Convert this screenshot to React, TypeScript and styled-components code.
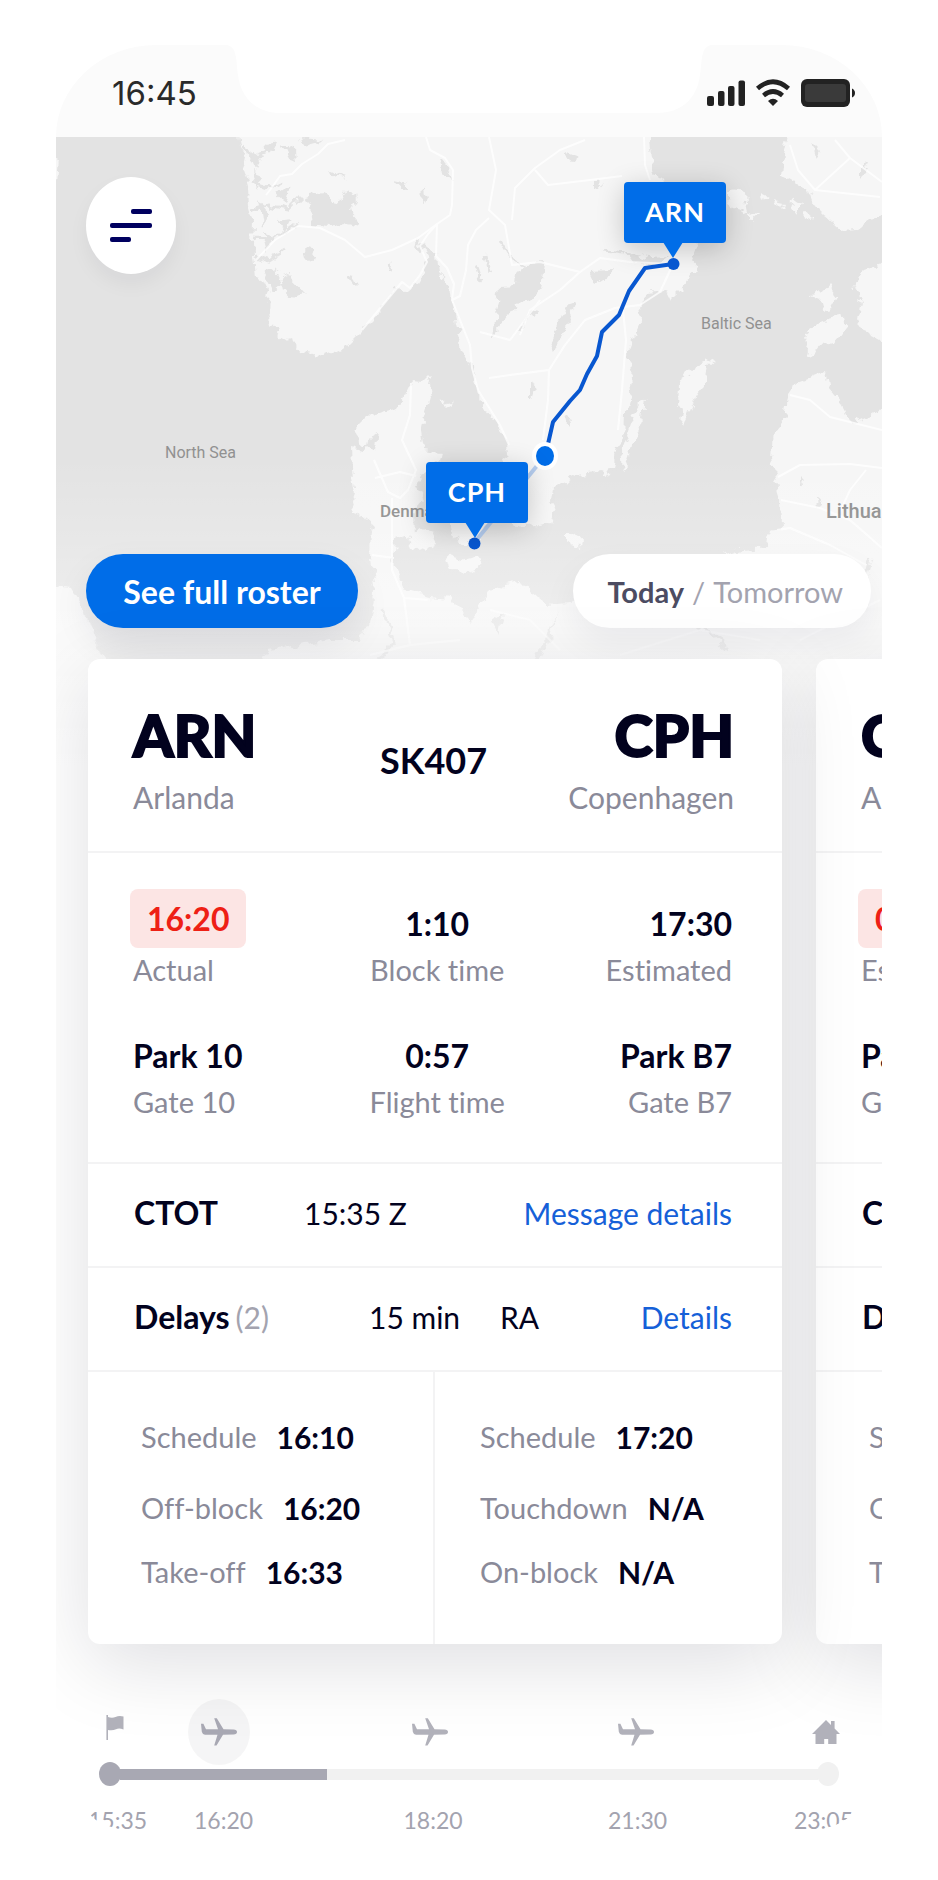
import React from "react";
import styled, { createGlobalStyle } from "styled-components";

const color = {
  ink: "#02021e",
  muted: "#8a8a99",
  faint: "#a3a3af",
  line: "#f3f3f4",
  blue: "#006de8",
  link: "#1560d8",
  red: "#ee2015",
};

const GlobalStyle = createGlobalStyle`
  * { box-sizing: border-box; }
  body {
    margin: 0;
    background: #fff;
    color: ${color.ink};
    font-family: Lato, "Open Sans", sans-serif;
    font-variant-ligatures: none;
  }
  button { font: inherit; border: 0; padding: 0; cursor: pointer; }
  h2, p, dl, dd, dt, ul { margin: 0; padding: 0; }
  ul { list-style: none; }
`;

const Page = styled.div`
  padding: 45px 56px;
`;

const Phone = styled.main`
  display: flex;
  flex-direction: column;
  overflow: hidden;
  border-radius: 100px 100px 0 0 / 92px 92px 0 0;
`;

/* ---------- status bar ---------- */

const StatusBar = styled.header`
  position: relative;
  display: flex;
  align-items: center;
  justify-content: space-between;
  height: 92px;
  padding: 4px 27px 0 56px;
  background: #fbfbfb;
`;

const Notch = styled.svg`
  position: absolute;
  top: 0;
  left: 50%;
  width: 484px;
  height: 68px;
  margin-left: -242px;
`;

const Clock = styled.time`
  font: 400 33px/40px Inter, sans-serif;
  color: #2a2a2a;
`;

/* ---------- map ---------- */

const MapSection = styled.section`
  position: relative;
  display: flex;
  flex-direction: column;
  justify-content: space-between;
  height: 522px;
  padding: 40px 11px 31px 30px;
`;

const MapCanvas = styled.div`
  position: absolute;
  top: 0;
  left: 0;
  right: 0;
  height: 640px;
  overflow: hidden;
  background: #e3e3e3;
`;

const MapDrawing = styled.svg`
  display: block;
  width: 826px;
  height: 640px;
`;

const MapFade = styled.div`
  position: absolute;
  inset: 0;
  background: linear-gradient(rgba(255, 255, 255, 0) 320px, rgba(255, 255, 255, 0.18) 403px, rgba(255, 255, 255, 0.5) 513px, #fff 630px);
`;

const MapLabel = styled.span<{ $x: number; $y: number; $size: number; $strong?: boolean }>`
  position: absolute;
  left: ${(p) => p.$x}px;
  top: ${(p) => p.$y}px;
  font: ${(p) => (p.$strong ? 500 : 400)} ${(p) => p.$size}px/20px Roboto, sans-serif;
  color: ${(p) => (p.$strong ? "#888" : "#919191")};
  white-space: nowrap;
`;

const Pin = styled.div<{ $x: number; $y: number }>`
  position: absolute;
  left: ${(p) => p.$x}px;
  top: ${(p) => p.$y}px;
  width: 102px;
  border-radius: 4px;
  background: ${color.blue};
  box-shadow: 0 6px 28px rgba(0, 0, 0, 0.2);
  color: #fff;
  font-size: 27px;
  font-weight: 700;
  line-height: 59px;
  padding-bottom: 2px;
  letter-spacing: 1px;
  text-align: center;

  &::after {
    content: "";
    position: absolute;
    top: 60px;
    left: 39px;
    border: solid transparent;
    border-width: 16px 10px 0;
    border-top-color: ${color.blue};
  }
`;

const MenuButton = styled.button`
  position: relative;
  display: flex;
  align-items: center;
  justify-content: center;
  width: 90px;
  height: 97px;
  border-radius: 50%;
  background: #fff;
  box-shadow: 0 10px 20px rgba(0, 0, 30, 0.05);
`;

const MapActions = styled.div`
  position: relative;
  display: flex;
  justify-content: space-between;
`;

const RosterButton = styled.button`
  width: 272px;
  height: 74px;
  border-radius: 37px;
  background: ${color.blue};
  box-shadow: 0 16px 36px rgba(0, 0, 50, 0.08);
  color: #fff;
  font-size: 32px;
  font-weight: 700;
`;

const DayToggle = styled.div`
  display: flex;
  align-items: center;
  justify-content: flex-end;
  gap: 8px;
  width: 298px;
  height: 74px;
  padding-right: 28px;
  border-radius: 37px;
  background: #fff;
  box-shadow: 0 16px 36px rgba(0, 0, 50, 0.06);
  color: ${color.faint};
  font-size: 29px;
`;

const DayButton = styled.button<{ $active?: boolean }>`
  background: none;
  color: ${(p) => (p.$active ? "#4c4c62" : color.faint)};
  font-weight: ${(p) => (p.$active ? 700 : 400)};
`;

/* ---------- flight cards ---------- */

const Carousel = styled.section`
  position: relative;
  display: flex;
  gap: 34px;
  padding-left: 32px;
`;

const Card = styled.article<{ $order: number }>`
  position: relative;
  z-index: ${(p) => 2 - p.$order};
  flex: 0 0 calc(100% - 100px);
  border-radius: 12px;
  background: #fff;
  box-shadow: 0 20px 80px rgba(0, 0, 30, 0.13);
`;

const Route = styled.div`
  display: grid;
  grid-template-columns: 1fr auto 1fr;
  align-items: center;
  padding: 46px 48px 36px 45px;
  border-bottom: 2px solid ${color.line};
`;

const Airport = styled.div<{ $end?: boolean }>`
  display: flex;
  flex-direction: column;
  gap: 14px;
  text-align: ${(p) => (p.$end ? "right" : "left")};
`;

const Code = styled.h2`
  font-size: 58px;
  font-weight: 900;
  line-height: 60px;
  -webkit-text-stroke: 2px ${color.ink};
`;

const FlightNumber = styled.p`
  font-size: 36px;
  font-weight: 700;
  line-height: 44px;
`;

const Caption = styled.span<{ $large?: boolean }>`
  color: ${color.muted};
  font-size: ${(p) => (p.$large ? 30 : 29)}px;
  line-height: 36px;
  white-space: nowrap;
`;

const Times = styled.div`
  display: grid;
  grid-template-columns: 25fr auto 24fr;
  align-items: end;
  row-gap: 44px;
  padding: 36px 50px 42px 45px;
  border-bottom: 2px solid ${color.line};
`;

const Stat = styled.div<{ $align: "flex-start" | "center" | "flex-end" }>`
  display: flex;
  flex-direction: column;
  align-items: ${(p) => p.$align};
  gap: 4px;
`;

const Value = styled.strong`
  font-size: 32px;
  font-weight: 700;
  line-height: 48px;
  white-space: nowrap;
`;

const LateBadge = styled(Value)`
  margin-left: -3px;
  padding: 0 17px;
  border-radius: 8px;
  background: #fce5e4;
  color: ${color.red};
  line-height: 59px;
`;

const InfoRow = styled.div`
  display: flex;
  align-items: baseline;
  padding: 31px 50px 35px 46px;
  border-bottom: 2px solid ${color.line};
  font-size: 30px;
  line-height: 36px;
  white-space: nowrap;
`;

const InfoLabel = styled.strong<{ $width: number }>`
  flex: 0 0 ${(p) => p.$width}px;
  font-size: 32px;
  font-weight: 700;
`;

const InfoValue = styled.span<{ $width: number }>`
  flex: 0 0 ${(p) => p.$width}px;
`;

const Count = styled.span`
  margin-left: 6px;
  color: ${color.faint};
  font-size: 30px;
  font-weight: 400;
`;

const InfoLink = styled.a`
  margin-left: auto;
  color: ${color.link};
  text-decoration: none;
`;

const Schedule = styled.div`
  display: grid;
  grid-template-columns: 345fr 349fr;
`;

const ScheduleList = styled.dl`
  padding: 47px 20px 54px 53px;

  & + & {
    padding-left: 45px;
    border-left: 2px solid ${color.line};
  }
`;

const ScheduleRow = styled.div`
  display: flex;
  gap: 20px;
  font-size: 30px;
  line-height: 36px;
  white-space: nowrap;

  & + & { margin-top: 28px; }
  &:first-child { padding-bottom: 7px; }

  dt {
    color: ${color.muted};
    font-size: 29px;
  }
  dd { font-weight: 700; }
`;

/* ---------- day timeline ---------- */

const Timeline = styled.section`
  position: relative;
  z-index: 3;
  padding: 55px 29px 16px 32px;
`;

const Stops = styled.ul`
  display: grid;
  grid-template-columns: 54fr 154fr 268fr 144fr 145fr;
  justify-items: center;
  align-items: center;

  li:last-child { justify-self: end; }
`;

const IconStop = styled.li<{ $active?: boolean }>`
  display: flex;
  align-items: center;
  justify-content: center;
  width: ${(p) => (p.$active ? 62 : 54)}px;
  height: 66px;
  border-radius: 50%;
  background: ${(p) => (p.$active ? "rgba(0, 0, 20, 0.04)" : "none")};
`;

const Track = styled.div`
  display: flex;
  align-items: center;
  margin: -3px 14px 0 11px;
`;

const TrackDot = styled.span<{ $done?: boolean }>`
  width: 22px;
  height: 24px;
  border-radius: 50%;
  background: ${(p) => (p.$done ? "#a8a8b3" : "#f1f1f1")};
`;

const TrackPart = styled.span<{ $done?: boolean }>`
  height: 11px;
  margin: 0 -1px;
  background: ${(p) => (p.$done ? "#a8a8b3" : "#f1f1f1")};
`;

const StopTimes = styled(Stops)`
  margin-top: 22px;
  overflow: hidden;
  border-radius: 0 0 60px 60px / 0 0 24px 24px;
  color: ${color.faint};
  font-size: 23px;
  line-height: 24px;
`;

const StopTime = styled.li`
  white-space: nowrap;
`;

/* ---------- drawings ---------- */

const StatusIcons = () => (
  <svg width="148" height="28" viewBox="707 79 148 28" aria-label="Signal, Wi-Fi, battery">
    <g fill="#222">
      <rect x="707" y="96" width="7" height="10" rx="2" />
      <rect x="718" y="91" width="6.5" height="15" rx="2" />
      <rect x="728" y="86" width="6.5" height="20" rx="2" />
      <rect x="738.5" y="80.5" width="6.5" height="25.500" rx="2" />
      <rect x="801" y="79" width="49" height="28" rx="6" />
      <path d="M852 88.500q3 1.500 3 4.500t-3 4.500z" />
      <path d="M773 106l-5-5q5-4.500 10 0z" />
    </g>
    <g fill="none" stroke="#222" strokeWidth="4.600">
      <path d="M763.500 95.500q9.500-8 19 0" />
      <path d="M757.500 88.500q15.500-13.500 31 0" />
    </g>
    <rect x="805" y="84" width="41" height="18" rx="3" fill="#3a3a3a" />
  </svg>
);

const MenuIcon = () => (
  <svg width="42" height="33" viewBox="0 0 42 33" fill="#00005f" aria-hidden="true">
    <rect x="21" y="0" width="21" height="5" rx="2" />
    <rect x="0" y="14" width="42" height="5" rx="2" />
    <rect x="0" y="28" width="21" height="5" rx="2" />
  </svg>
);

const Plane = ({ strong }: { strong?: boolean }) => (
  <svg width="36" height="28" viewBox="0 0 36 27.500" fill={strong ? "#a8a8b3" : "#b1b1ba"} aria-hidden="true">
    <path d="M0 5.500H2.400L5 11H17L13.200 0H15.800L22.500 11L32.500 11.200Q36 11.600 36 13.800Q36 16 32.500 16.200L22 16.500L15.500 27.300H13.200L16.500 16.500H4Q1.500 16.300 .8 13.500Z" />
  </svg>
);

const Flag = () => (
  <svg width="18" height="36" viewBox="0 0 18 36" fill="#b1b1ba" aria-hidden="true">
    <path d="M.4 1H2V3Q6 4.500 9.500 3Q13 1.300 17.500 2.500V15.500Q13 13.800 10 15.300Q6.500 17 2 16V26H.4Z" />
  </svg>
);

const House = () => (
  <svg width="28" height="24" viewBox="0 0 28 24" fill="#b1b1ba" aria-hidden="true">
    <path d="M14 0L19 5V1H22.600V8.600L28 14H24.500V24H16.200V19H12.200V24H3.500V14H0Z" />
  </svg>
);

const MapArt = () => (
  <MapDrawing viewBox="56 137 826 640" aria-hidden="true">
    <defs>
      <filter id="coast" x="-2%" y="-2%" width="104%" height="104%">
        <feTurbulence type="fractalNoise" baseFrequency="0.09" numOctaves="3" seed="4" />
        <feDisplacementMap in="SourceGraphic" scale="13" xChannelSelector="R" yChannelSelector="G" />
      </filter>
    </defs>
    <g filter="url(#coast)">
      <g fill="#f6f6f6">
        <path d="M236 125L240 146L246 157L243 170L248 186L249 205L254 222L253 245L256 276L262 278L269 292L267 310L270 324L280 336L296 347L300 352L325 356L345 347L362 330L380 312L386 300L400 288L410 290L418 284L425 272L428 254L436 254L438 272L451 284L453 302L456 325L461 342L463 353L472 368L476 385L480 400L489 415L500 430L508 441L509 453L500 460L505 485L512 523L530 526L550 523L555 512L551 498L553 488L564 482L575 475L600 473L607 478L613 469L617 447L624 438L625 415L630 400L628 385L633 374L626 355L632 340L641 320L639 308L647 292L665 290L670 300L680 290L690 277L697 268L690 260L699 243L692 228L680 213L668 203L672 184L657 178L652 165L649 150L647 125Z" />
        <path d="M432 374L424 382L412 381L405 396L397 408L383 412L368 415L358 425L355 437L365 446L371 436L377 432L375 448L361 450L351 447L352 470L356 495L350 512L366 518L373 530L372 560L376 585L370 620L360 640L330 640L270 650L255 670L255 790L890 790L890 405L870 416L852 424L846 416L842 402L828 386L825 372L797 383L788 396L785 417L774 430L772 458L776 478L780 498L781 528L770 530L768 548L740 550L690 568L640 574L600 590L570 603L545 605L533 596L520 582L507 585L490 592L470 620L450 600L430 598L405 590L392 562L395 540L413 534L412 515L425 500L417 485L425 470L441 462L443 453L424 450L421 430L424 418L431 395L429 385Z" />
        <path d="M407 535L420 527L433 532L438 544L425 552L411 546Z" />
        <path d="M447 512L462 500L486 498L490 520L478 545L464 545L450 534Z" />
        <path d="M448 555L462 560L476 556L482 565L470 571L452 570Z" />
        <path d="M718 357L708 366L704 385L692 404L685 420L680 427L683 412L678 405L679 387L691 369Z" />
        <path d="M645 398L643 418L634 440L624 472L622 450L635 415Z" />
        <path d="M567 531L581 540L580 547L567 541Z" />
        <path d="M440 402L448 400L452 401L444 406Z" />
        <path d="M804 335L820 322L843 316L845 330L835 343L820 345L812 358L806 350Z" />
        <path d="M808 294L820 293L828 284L838 297L832 308L823 310L820 300Z" />
        <path d="M890 262L862 272L855 290L862 305L859 320L870 337L890 348Z" />
        <path d="M790 125L783 155L781 175L795 183L808 188L815 205L825 215L842 230L856 229L870 218L890 215L890 125Z" />
        <path d="M728 190L744 192L748 210L738 213L728 200ZM745 212L757 215L752 221ZM775 200L785 202L783 208ZM762 193L768 196L765 201ZM790 198L800 205L795 213ZM805 212L812 218L806 221Z" />
        <path d="M50 155L59 162L57 180L50 180ZM40 585L72 588L85 610L95 640L110 670L110 800L40 800Z" />
      </g>
      <g fill="#e3e3e3">
        <path d="M305 195L325 192L330 202L340 203L345 191L357 196L351 212L358 220L360 228L352 226L342 224L335 228L312 224L310 206Z" />
        <path d="M283 143L295 150L296 160L289 157ZM327 168L348 178L332 175ZM394 180L407 183L407 188L397 186ZM437 158L449 165L452 180L440 170ZM424 184L427 198L423 206ZM282 277L288 275L306 294L294 300L285 290ZM262 272L275 268L282 283L272 292ZM310 245L316 248L312 260L305 258ZM388 263L395 274L391 273Z" />
        <path d="M500 287L517 286L518 274L528 263L545 262L542 288L530 302L516 304L503 325L493 337L496 314Z" />
        <path d="M568 303L576 308L562 338L552 352L548 346Z" />
        <path d="M590 271L612 270L607 277L596 284ZM625 250L650 258L670 257L662 264L635 263ZM561 150L579 157L570 164ZM597 181L602 184L597 190ZM530 382L536 385L532 398L530 398ZM565 415L572 418L568 426ZM812 142L820 150L816 157ZM862 160L868 170L862 178ZM802 475L807 480L802 487ZM815 495L823 502L816 508Z" />
        <path d="M258 200L268 213L262 228ZM262 232L274 237L267 252ZM275 195L292 184L286 204ZM278 220L291 218L284 232ZM248 150L262 160L256 168ZM252 168L264 176L257 190ZM264 145L276 143L270 155ZM300 138L326 140L303 146ZM430 435L421 430L444 428ZM530 690L560 610L535 660ZM490 620L503 612L498 635Z" />
      </g>
      <g fill="none" stroke="#e3e3e3" strokeWidth="3">
        <path d="M252 183L266 188L280 181M254 210L268 206L288 210L302 196M256 238L274 240L298 222M256 255L270 260L286 250M243 147L255 156L270 150M387 262L395 274M418 240L430 260M348 275L356 286M500 240L512 260L527 268M475 265L480 280M486 255L490 272M520 330L535 310M605 250L625 252" />
        <path d="M384 612L394 640L380 660M600 602L620 618M700 625L730 650M870 560L862 585L868 610" />
      </g>
    </g>
    <g fill="none" stroke="#fff" strokeWidth="2" strokeLinejoin="round" opacity=".75">
      <path d="M266 195L270 190L280 176L292 174L302 164L318 154L328 144L345 140M256 260L275 240L298 226L320 228L345 240L365 257L392 250L418 238L437 224" />
      <path d="M426 137L430 150L445 158L453 170L452 205L450 215L437 224L428 234L420 246L427 262L420 275L410 288L402 282L382 306L362 330" />
      <path d="M437 224L436 256L447 268L454 284L452 300L462 325L470 345L472 368L478 390L500 425L509 445M452 300L460 296L466 270L468 245L476 230L489 218M480 332L510 340L540 300" />
      <path d="M489 137L496 170L489 210L505 225L512 265L540 262L580 272L600 258L630 262L673 264M580 272L560 290L530 310L520 335M512 220L515 188L535 168L560 150L585 140M644 137L645 165L650 180M673 264L660 292L640 305L615 308L585 320L565 345L549 370L548 400L543 440M489 378L510 375L549 370M535 170L548 185L590 180L622 176M623 310L626 340L622 390L618 430" />
      <path d="M411 383L410 415L402 440L416 470L408 490L400 498L388 492L374 460M375 478L400 472L416 476M392 498L392 570L404 598L410 645L460 640M372 555L394 558M404 598L430 600M410 645L370 655" />
      <path d="M778 477L800 465L850 464L882 468M781 500L820 508L850 520L882 548M777 530L790 528L830 545L866 565M790 395L810 400L830 417L882 430M866 470L850 490L840 512M790 145L798 170L815 190L880 197M815 190L850 158L882 182M850 158L835 140" />
      <path d="M490 610L530 620L560 650M620 655L700 630L760 640M800 640L880 600" opacity=".7" />
    </g>
  </MapDrawing>
);

const RouteArt = styled.svg`
  position: absolute;
  top: 0;
  left: 0;
  width: 826px;
  height: 522px;
  pointer-events: none;
`;

/* ---------- content ---------- */

type Flight = {
  from: [string, string];
  to: [string, string];
  number: string;
  late: [string, string];
  arrival: [string, string];
  block: string;
  air: string;
  fromStand: [string, string];
  toStand: [string, string];
  left: [string, string][];
  right: [string, string][];
};

const flights: Flight[] = [
  {
    from: ["ARN", "Arlanda"],
    to: ["CPH", "Copenhagen"],
    number: "SK407",
    late: ["16:20", "Actual"],
    arrival: ["17:30", "Estimated"],
    block: "1:10",
    air: "0:57",
    fromStand: ["Park 10", "Gate 10"],
    toStand: ["Park B7", "Gate B7"],
    left: [["Schedule", "16:10"], ["Off-block", "16:20"], ["Take-off", "16:33"]],
    right: [["Schedule", "17:20"], ["Touchdown", "N/A"], ["On-block", "N/A"]],
  },
  {
    from: ["CPH", "Arlanda"],
    to: ["ARN", "Arlanda"],
    number: "SK408",
    late: ["08:20", "Estimated"],
    arrival: ["19:30", "Estimated"],
    block: "1:10",
    air: "0:57",
    fromStand: ["Park B7", "Gate B7"],
    toStand: ["Park 10", "Gate 10"],
    left: [["Schedule", "18:20"], ["Off-block", "N/A"], ["Take-off", "N/A"]],
    right: [["Schedule", "19:30"], ["Touchdown", "N/A"], ["On-block", "N/A"]],
  },
];

const FlightCard = ({ flight, order }: { flight: Flight; order: number }) => (
  <Card $order={order}>
    <Route>
      <Airport>
        <Code>{flight.from[0]}</Code>
        <Caption $large>{flight.from[1]}</Caption>
      </Airport>
      <FlightNumber>{flight.number}</FlightNumber>
      <Airport $end>
        <Code>{flight.to[0]}</Code>
        <Caption $large>{flight.to[1]}</Caption>
      </Airport>
    </Route>
    <Times>
      <Stat $align="flex-start">
        <LateBadge>{flight.late[0]}</LateBadge>
        <Caption>{flight.late[1]}</Caption>
      </Stat>
      <Stat $align="center">
        <Value>{flight.block}</Value>
        <Caption>Block time</Caption>
      </Stat>
      <Stat $align="flex-end">
        <Value>{flight.arrival[0]}</Value>
        <Caption>{flight.arrival[1]}</Caption>
      </Stat>
      <Stat $align="flex-start">
        <Value>{flight.fromStand[0]}</Value>
        <Caption>{flight.fromStand[1]}</Caption>
      </Stat>
      <Stat $align="center">
        <Value>{flight.air}</Value>
        <Caption>Flight time</Caption>
      </Stat>
      <Stat $align="flex-end">
        <Value>{flight.toStand[0]}</Value>
        <Caption>{flight.toStand[1]}</Caption>
      </Stat>
    </Times>
    <InfoRow>
      <InfoLabel $width={170}>CTOT</InfoLabel>
      <InfoValue $width={120}>15:35 Z</InfoValue>
      <InfoLink href="#message">Message details</InfoLink>
    </InfoRow>
    <InfoRow>
      <InfoLabel $width={235}>
        Delays<Count>(2)</Count>
      </InfoLabel>
      <InfoValue $width={131}>15 min</InfoValue>
      <InfoValue $width={40}>RA</InfoValue>
      <InfoLink href="#delays">Details</InfoLink>
    </InfoRow>
    <Schedule>
      {[flight.left, flight.right].map((rows, side) => (
        <ScheduleList key={side}>
          {rows.map(([name, time]) => (
            <ScheduleRow key={name}>
              <dt>{name}</dt>
              <dd>{time}</dd>
            </ScheduleRow>
          ))}
        </ScheduleList>
      ))}
    </Schedule>
  </Card>
);

export default function App() {
  return (
    <>
      <GlobalStyle />
      <Page>
        <Phone>
          <StatusBar>
            <Notch viewBox="0 0 484 68" aria-hidden="true">
              <path fill="#fff" d="M0 0Q7 1 9 12C10 20 10 24 11 30C14 54 30 68 54 68H430C454 68 470 54 473 30C474 24 474 20 475 12Q477 1 484 0Z" />
            </Notch>
            <Clock>16:45</Clock>
            <StatusIcons />
          </StatusBar>

          <MapSection>
            <MapCanvas>
              <MapArt />
              <MapLabel $x={109} $y={306} $size={16}>North Sea</MapLabel>
              <MapLabel $x={645} $y={177} $size={16}>Baltic Sea</MapLabel>
              <MapLabel $x={324} $y={364} $size={17} $strong>Denmark</MapLabel>
              <MapLabel $x={770} $y={364} $size={20} $strong>Lithuania</MapLabel>
              <MapFade />
            </MapCanvas>
            <Pin $x={568} $y={45}>ARN</Pin>
            <RouteArt viewBox="56 137 826 522" aria-hidden="true">
              <g fill="none" strokeWidth="4" strokeLinejoin="round">
                <path stroke="#b5cdef" d="M545 456L474 543" />
                <path stroke="#0857d0" d="M673 264L645 268L629 291L619 315L602 332L597 356L587 374L580 390L570 401L553 422L548 444" />
              </g>
              <circle cx="673.500" cy="264" r="6" fill="#0857d0" />
              <circle cx="474.500" cy="543.500" r="6" fill="#0857d0" />
              <ellipse cx="545" cy="456" rx="13" ry="14" fill="#fff" />
              <ellipse cx="545" cy="456" rx="9" ry="10" fill={color.blue} />
            </RouteArt>
            <Pin $x={370} $y={325}>CPH</Pin>
            <MenuButton aria-label="Menu">
              <MenuIcon />
            </MenuButton>
            <MapActions>
              <RosterButton>See full roster</RosterButton>
              <DayToggle>
                <DayButton $active>Today</DayButton>/<DayButton>Tomorrow</DayButton>
              </DayToggle>
            </MapActions>
          </MapSection>

          <Carousel>
            {flights.map((flight, i) => (
              <FlightCard key={flight.number} flight={flight} order={i} />
            ))}
          </Carousel>

          <Timeline>
            <Stops>
              <IconStop><Flag /></IconStop>
              <IconStop $active><Plane strong /></IconStop>
              <IconStop><Plane /></IconStop>
              <IconStop><Plane /></IconStop>
              <IconStop><House /></IconStop>
            </Stops>
            <Track>
              <TrackDot $done />
              <TrackPart $done style={{ flexGrow: 208 }} />
              <TrackPart style={{ flexGrow: 488 }} />
              <TrackDot />
            </Track>
            <StopTimes>
              {["15:35", "16:20", "18:20", "21:30", "23:05"].map((time) => (
                <StopTime key={time}>{time}</StopTime>
              ))}
            </StopTimes>
          </Timeline>
        </Phone>
      </Page>
    </>
  );
}
